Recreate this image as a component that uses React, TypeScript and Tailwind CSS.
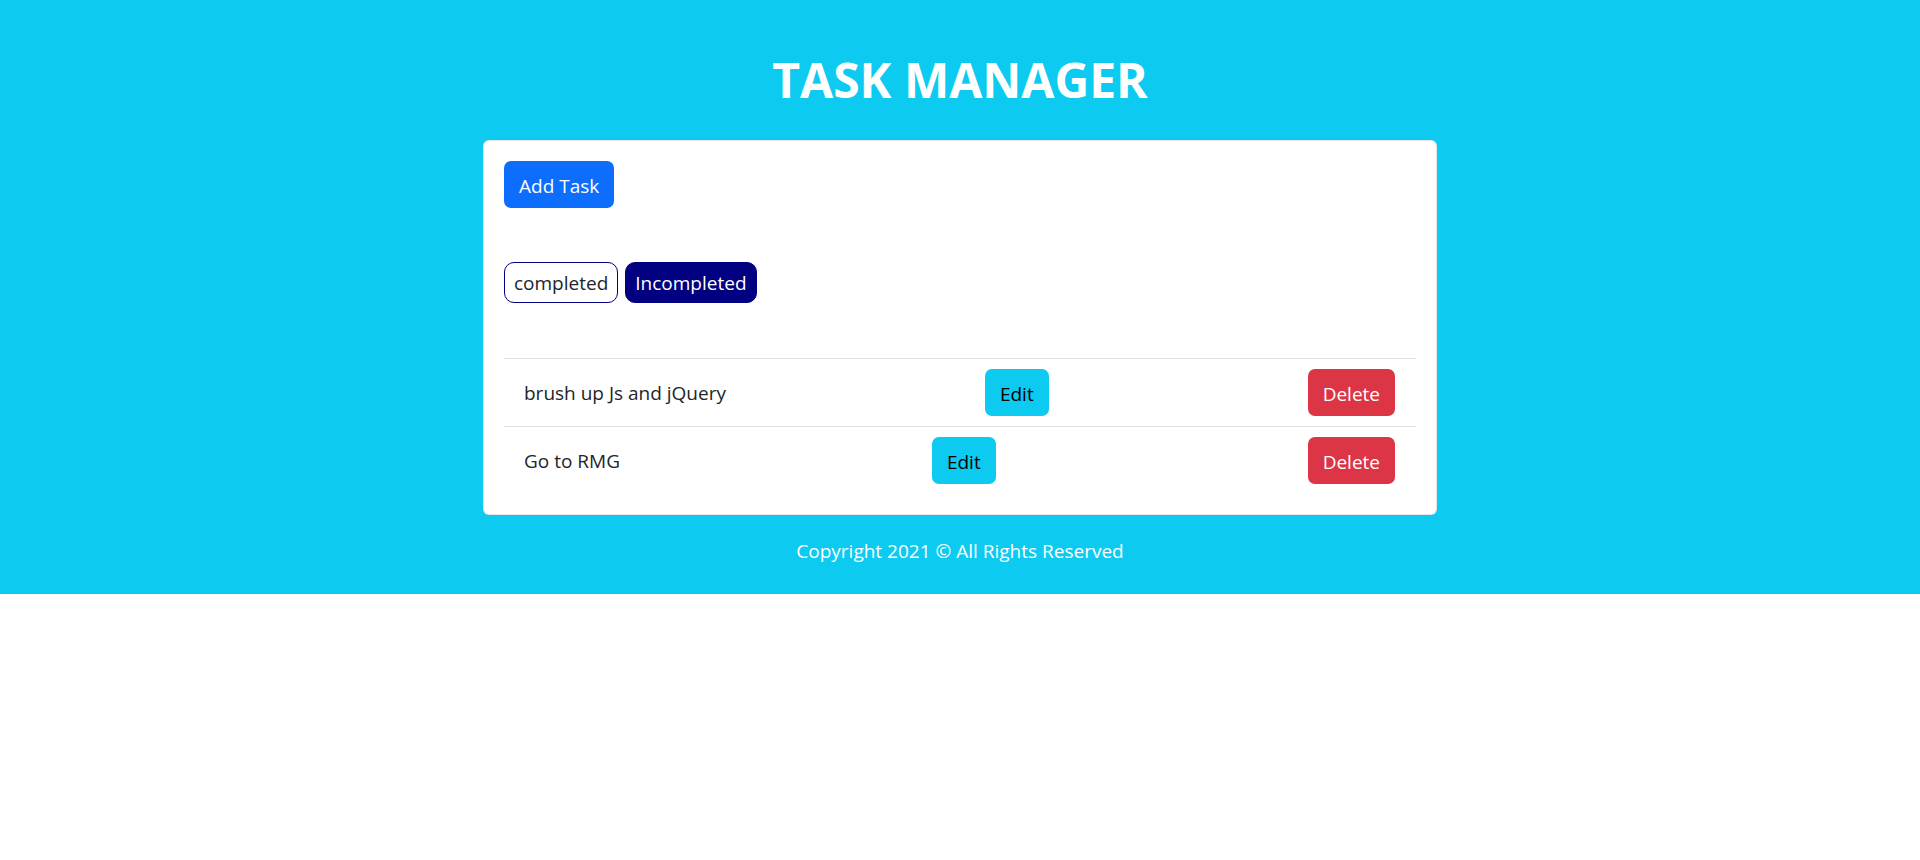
import { useState } from "react";

type Task = { id: number; title: string; completed: boolean };

const initialTasks: Task[] = [
  { id: 1, title: "brush up Js and jQuery", completed: false },
  { id: 2, title: "Go to RMG", completed: false },
];

export default function App() {
  const [tasks] = useState<Task[]>(initialTasks);
  const [showCompleted, setShowCompleted] = useState(false);

  const visible = tasks.filter((t) => t.completed === showCompleted);

  return (
    <div className="font-['Open_Sans','Noto_Sans',sans-serif] text-[#212529] text-[19px]">
      <section className="bg-[#0dcaf0] pt-[50px] pb-[28px]">
        <h1 className="text-center text-white font-bold text-[48px] h-[60px] leading-[60px] mb-[30px]">
          TASK MANAGER
        </h1>

        <div className="w-[954px] mx-auto bg-white border border-black/10 rounded-[6px] p-5">
          <button className="h-[47px] px-[15px] pt-[3px] bg-[#0d6efd] text-white rounded-[7px]">
            Add Task
          </button>

          <div className="flex gap-[7px] mt-[54px]">
            <button
              onClick={() => setShowCompleted(true)}
              className={
                showCompleted
                  ? "h-[41px] px-[9px] pt-[2px] rounded-[10px] border border-[#000080] bg-[#000080] text-white"
                  : "h-[41px] px-[9px] pt-[2px] rounded-[10px] border border-[#000080] bg-white text-[#212529]"
              }
            >
              completed
            </button>
            <button
              onClick={() => setShowCompleted(false)}
              className={
                showCompleted
                  ? "h-[41px] px-[9px] pt-[2px] rounded-[10px] border border-[#000080] bg-white text-[#212529]"
                  : "h-[41px] px-[9px] pt-[2px] rounded-[10px] border border-[#000080] bg-[#000080] text-white"
              }
            >
              Incompleted
            </button>
          </div>

          <div className="mt-[55px]">
            {visible.map((task) => (
              <div
                key={task.id}
                className="h-[68px] border-t border-[#dee2e6] flex items-center justify-between pl-5 pr-[21px]"
              >
                <span className="pt-[2px]">{task.title}</span>
                <button className="h-[47px] px-[15px] pt-[3px] bg-[#0dcaf0] text-black rounded-[7px]">
                  Edit
                </button>
                <button className="h-[47px] px-[15px] pt-[3px] bg-[#dc3545] text-white rounded-[7px]">
                  Delete
                </button>
              </div>
            ))}
          </div>
        </div>

        <footer className="text-center text-white mt-[21px] h-[30px] leading-[30px]">
          Copyright 2021 © All Rights Reserved
        </footer>
      </section>
    </div>
  );
}
